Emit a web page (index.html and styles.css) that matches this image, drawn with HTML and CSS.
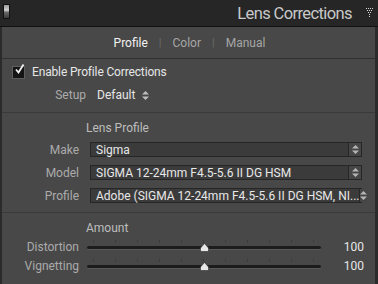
FILE: index.html
```html
<!DOCTYPE html>
<html lang="en">
<head>
    <meta charset="UTF-8">
    <title>Lens Corrections</title>
    <link rel="stylesheet" href="styles.css">
</head>
<body>
    <div class="panel">
        <div class="header">
            <span class="solo-toggle"></span>
            <span class="title">Lens Corrections</span>
            <svg class="collapse" width="8" height="10" viewBox="0 0 8 10">
                <g fill="#d8d8d8">
                    <rect x="0" y="0" width="1" height="1"/><rect x="2" y="0" width="1" height="1"/><rect x="4" y="0" width="1" height="1"/><rect x="6" y="0" width="1" height="1"/>
                    <rect x="1" y="2" width="1" height="1"/><rect x="3" y="2" width="1" height="1"/><rect x="5" y="2" width="1" height="1"/>
                    <rect x="2" y="4" width="1" height="1"/><rect x="4" y="4" width="1" height="1"/>
                    <rect x="3" y="6" width="1" height="1"/>
                    <rect x="3" y="8" width="1" height="1"/>
                </g>
            </svg>
        </div>

        <div class="body">
            <div class="tabs">
                <span class="tab active">Profile</span>
                <span class="sep">|</span>
                <span class="tab">Color</span>
                <span class="sep">|</span>
                <span class="tab">Manual</span>
            </div>

            <div class="section enable">
                <label class="check-row">
                    <span class="checkbox">
                        <svg width="11" height="11" viewBox="0 0 11 11">
                            <path d="M2 5.5 L4.5 8.5 L9.5 0.5" fill="none" stroke="#f2f2f2" stroke-width="1.8"/>
                        </svg>
                    </span>
                    Enable Profile Corrections
                </label>
                <div class="setup-row">
                    <span class="label">Setup</span>
                    <span class="value">Default</span>
                    <span class="updown">
                        <svg width="7" height="9" viewBox="0 0 7 9">
                            <path d="M3.5 0 L7 3.5 L0 3.5 Z M0 5.5 L7 5.5 L3.5 9 Z" fill="#bdbdbd"/>
                        </svg>
                    </span>
                </div>
            </div>

            <div class="section lens">
                <div class="heading">Lens Profile</div>
                <div class="field">
                    <span class="label">Make</span>
                    <div class="select">
                        <span class="select-text">Sigma</span>
                        <span class="stepper"><svg width="7" height="9" viewBox="0 0 7 9"><path d="M3.5 0 L7 3.5 L0 3.5 Z M0 5.5 L7 5.5 L3.5 9 Z" fill="#b5b5b5"/></svg></span>
                    </div>
                </div>
                <div class="field">
                    <span class="label">Model</span>
                    <div class="select">
                        <span class="select-text">SIGMA 12-24mm F4.5-5.6 II DG HSM</span>
                        <span class="stepper"><svg width="7" height="9" viewBox="0 0 7 9"><path d="M3.5 0 L7 3.5 L0 3.5 Z M0 5.5 L7 5.5 L3.5 9 Z" fill="#b5b5b5"/></svg></span>
                    </div>
                </div>
                <div class="field">
                    <span class="label">Profile</span>
                    <div class="select">
                        <span class="select-text">Adobe (SIGMA 12-24mm F4.5-5.6 II DG HSM, NI...</span>
                        <span class="stepper"><svg width="7" height="9" viewBox="0 0 7 9"><path d="M3.5 0 L7 3.5 L0 3.5 Z M0 5.5 L7 5.5 L3.5 9 Z" fill="#b5b5b5"/></svg></span>
                    </div>
                </div>
            </div>

            <div class="section amount">
                <div class="heading">Amount</div>
                <div class="slider-row">
                    <span class="label">Distortion</span>
                    <div class="slider">
                        <div class="ticks"><i></i><i></i><i></i><i></i><i></i><i></i><i></i><i></i><i></i><i></i><i></i></div>
                        <div class="track"></div>
                        <svg class="thumb" style="left: 50%" width="9" height="9" viewBox="0 0 9 9">
                            <path d="M4.5 0.5 L8.5 5 L8.5 8.5 L0.5 8.5 L0.5 5 Z" fill="#e8e8e8" stroke="#2a2a2a" stroke-width="0.6"/>
                        </svg>
                    </div>
                    <span class="amount-value">100</span>
                </div>
                <div class="slider-row">
                    <span class="label">Vignetting</span>
                    <div class="slider">
                        <div class="ticks"><i></i><i></i><i></i><i></i><i></i><i></i><i></i><i></i><i></i><i></i><i></i></div>
                        <div class="track"></div>
                        <svg class="thumb" style="left: 50%" width="9" height="9" viewBox="0 0 9 9">
                            <path d="M4.5 0.5 L8.5 5 L8.5 8.5 L0.5 8.5 L0.5 5 Z" fill="#e8e8e8" stroke="#2a2a2a" stroke-width="0.6"/>
                        </svg>
                    </div>
                    <span class="amount-value">100</span>
                </div>
            </div>
        </div>
    </div>
</body>
</html>
```

FILE: styles.css
```css
html, body {
    margin: 0;
    padding: 0;
    background: #2a2a2a;
}
body {
    font-family: Roboto, "Open Sans", sans-serif;
    font-size: 11.5px;
    color: #dcdcdc;
}
.panel {
    width: 378px;
    height: 284px;
    overflow: hidden;
    display: flex;
    flex-direction: column;
}
.header {
    height: 26px;
    background: #262626;
    border-bottom: 1px solid #111;
    display: flex;
    align-items: center;
    padding: 0 4px 0 3px;
}
.solo-toggle {
    width: 7px;
    height: 15px;
    box-sizing: border-box;
    border: 1px solid #111;
    background: linear-gradient(#9a9a9a 0, #d0d0d0 40%, #6a6a6a 55%, #3a3a3a 100%);
    margin-top: -3px;
}
.title {
    margin-left: auto;
    font-size: 16.5px;
    color: #c9c9c9;
    margin-right: 14px;
    letter-spacing: -0.6px;
}
.collapse {
    margin-top: -1px;
}
.body {
    flex: 1;
    background: #484848;
    border-left: 2px solid #2b2b2b;
    border-right: 3px solid #2b2b2b;
}
.tabs {
    height: 31px;
    display: flex;
    align-items: center;
    justify-content: center;
    gap: 11px;
    border-bottom: 1px solid #303030;
    padding-left: 2px;
}
.tab {
    color: #a6a6a6;
    font-size: 12px;
}
.tab.active {
    color: #f2f2f2;
}
.sep {
    color: #6a6a6a;
    font-size: 11px;
}
.section {
    border-bottom: 1px solid #3a3a3a;
}
.enable {
    height: 54px;
    padding: 6px 0 0 10px;
    box-sizing: border-box;
}
.check-row {
    display: flex;
    align-items: center;
    gap: 7px;
    font-size: 12px;
    letter-spacing: -0.15px;
    color: #e6e6e6;
    height: 14px;
}
.checkbox {
    width: 11px;
    height: 11px;
    background: #141414;
    border: 1px solid #5e5e5e;
    position: relative;
}
.checkbox svg {
    position: absolute;
    left: 1px;
    top: -3px;
}
.setup-row {
    display: flex;
    align-items: center;
    margin-top: 9px;
    height: 14px;
}
.label {
    color: #ababab;
    font-size: 12px;
    text-align: right;
}
.setup-row .label {
    width: 74px;
}
.setup-row .value {
    margin-left: 11px;
    color: #e6e6e6;
    font-size: 12px;
}
.updown {
    margin-left: 7px;
    display: flex;
}
.lens {
    height: 100px;
    box-sizing: border-box;
    padding-top: 8px;
}
.heading {
    color: #bdbdbd;
    font-size: 12px;
    padding-left: 84px;
    height: 15px;
    line-height: 15px;
}
.field {
    display: flex;
    align-items: center;
    margin-top: 8px;
}
.lens .heading + .field {
    margin-top: 6px;
}
.field .label {
    width: 77px;
}
.select {
    margin-left: 11px;
    width: 272px;
    height: 15px;
    box-sizing: border-box;
    background: #3b3b3b;
    border: 1px solid #262626;
    display: flex;
    align-items: center;
}
.select-text {
    flex: 1;
    color: #e8e8e8;
    font-size: 12px;
    padding-left: 5px;
    white-space: nowrap;
}
.stepper {
    width: 12px;
    height: 13px;
    border-left: 1px solid #262626;
    background: #464646;
    display: flex;
    align-items: center;
    justify-content: center;
}
.amount {
    border-bottom: none;
    padding-top: 8px;
}
.slider-row {
    display: flex;
    align-items: center;
    height: 19px;
}
.amount .heading + .slider-row {
    margin-top: 1px;
}
.slider-row .label {
    width: 77px;
}
.slider {
    position: relative;
    margin-left: 8px;
    width: 234px;
    height: 19px;
}
.ticks {
    position: absolute;
    left: 6px;
    right: 7px;
    top: 3px;
    display: flex;
    justify-content: space-between;
}
.ticks i {
    width: 1px;
    height: 3px;
    background: #3c3c3c;
}
.track {
    position: absolute;
    left: 0;
    right: 0;
    top: 9px;
    height: 3px;
    border-radius: 2px;
    background: #1c1c1c;
    box-shadow: 0 1px 0 #595959;
}
.thumb {
    position: absolute;
    top: 6px;
    margin-left: -4px;
}
.amount-value {
    margin-left: auto;
    margin-right: 11px;
    color: #e6e6e6;
    font-size: 12px;
}
```
